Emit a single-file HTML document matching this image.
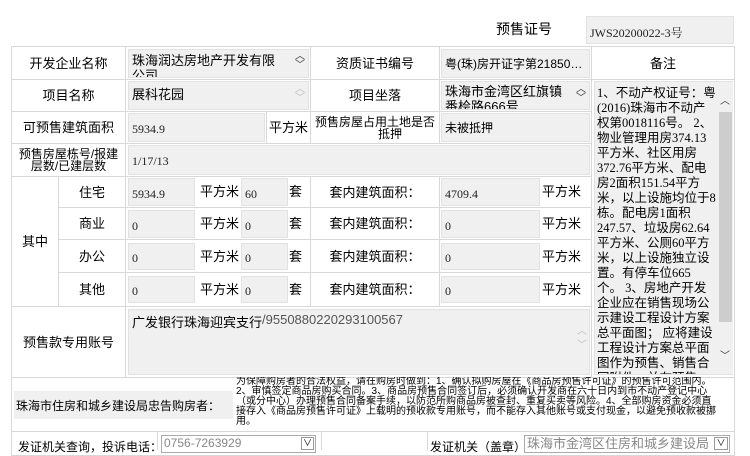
<!DOCTYPE html>
<html><head><meta charset="utf-8"><style>
*{margin:0;padding:0;box-sizing:border-box}
body{width:750px;height:450px;background:#fff;position:relative;overflow:hidden;font-family:"Liberation Sans","Noto Sans CJK SC",sans-serif;font-size:13px;color:#000}
.a{position:absolute}
.c{position:absolute;border:1px solid #d8d8d8;display:flex;align-items:center;justify-content:center;text-align:center;line-height:13px}
.i{position:absolute;background:#f0f0f0;border:1px solid #e2e2e2;display:flex;align-items:center;padding-left:3px;font-family:"Liberation Serif","Noto Serif CJK SC",serif;font-size:12px;color:#222;white-space:nowrap;overflow:hidden}
.u{position:absolute;display:flex;align-items:center;font-size:13px}
.arr{position:absolute;font-size:10px;color:#333;line-height:9px;text-align:center;width:12px}
</style></head><body>
<div class="a" style="left:496px;top:19px;font-size:14px">预售证号</div>
<div class="i" style="left:586px;top:16px;width:148px;height:28px;padding-top:4px">JWS20200022-3号</div>

<div class="c" style="left:11px;top:46px;width:115px;height:34px">开发企业名称</div>
<div class="c" style="left:125px;top:46px;width:186px;height:34px"></div>
<div class="c" style="left:310px;top:46px;width:130px;height:34px">资质证书编号</div>
<div class="c" style="left:439px;top:46px;width:153px;height:34px"></div>
<div class="c" style="left:591px;top:46px;width:144px;height:34px">备注</div>

<div class="c" style="left:11px;top:79px;width:115px;height:33px">项目名称</div>
<div class="c" style="left:125px;top:79px;width:186px;height:33px"></div>
<div class="c" style="left:310px;top:79px;width:130px;height:33px">项目坐落</div>
<div class="c" style="left:439px;top:79px;width:153px;height:33px"></div>
<div class="c" style="left:591px;top:79px;width:144px;height:299px"></div>

<div class="c" style="left:11px;top:111px;width:115px;height:33px">可预售建筑面积</div>
<div class="c" style="left:125px;top:111px;width:142px;height:33px"></div>
<div class="c" style="left:266px;top:111px;width:45px;height:33px">平方米</div>
<div class="c" style="left:310px;top:111px;width:130px;height:33px;font-size:12px;line-height:12px">预售房屋占用土地是否<br>&nbsp;&nbsp;&nbsp;&nbsp;&nbsp;&nbsp;&nbsp;&nbsp;&nbsp;抵押</div>
<div class="c" style="left:439px;top:111px;width:153px;height:33px"></div>

<div class="c" style="left:11px;top:143px;width:115px;height:34px;font-size:12px;line-height:12px">预售房屋栋号/报建<br>层数/已建层数</div>
<div class="c" style="left:125px;top:143px;width:467px;height:34px"></div>

<div class="c" style="left:11px;top:176px;width:48px;height:131px">其中</div>
<div class="c" style="left:58px;top:176px;width:68px;height:32px">住宅</div>
<div class="c" style="left:58px;top:207px;width:68px;height:33px">商业</div>
<div class="c" style="left:58px;top:239px;width:68px;height:34px">办公</div>
<div class="c" style="left:58px;top:272px;width:68px;height:35px">其他</div>
<div class="c" style="left:125px;top:176px;width:186px;height:32px"></div>
<div class="c" style="left:125px;top:207px;width:186px;height:33px"></div>
<div class="c" style="left:125px;top:239px;width:186px;height:34px"></div>
<div class="c" style="left:125px;top:272px;width:186px;height:35px"></div>
<div class="c" style="left:310px;top:176px;width:130px;height:32px">套内建筑面积：</div>
<div class="c" style="left:310px;top:207px;width:130px;height:33px">套内建筑面积：</div>
<div class="c" style="left:310px;top:239px;width:130px;height:34px">套内建筑面积：</div>
<div class="c" style="left:310px;top:272px;width:130px;height:35px">套内建筑面积：</div>
<div class="c" style="left:439px;top:176px;width:153px;height:32px"></div>
<div class="c" style="left:439px;top:207px;width:153px;height:33px"></div>
<div class="c" style="left:439px;top:239px;width:153px;height:34px"></div>
<div class="c" style="left:439px;top:272px;width:153px;height:35px"></div>

<div class="c" style="left:11px;top:306px;width:115px;height:72px">预售款专用账号</div>
<div class="c" style="left:125px;top:306px;width:467px;height:72px"></div>

<div class="c" style="left:11px;top:377px;width:724px;height:55px"></div>
<div class="c" style="left:11px;top:431px;width:724px;height:25px"></div>

<div class="i" style="left:128px;top:49px;width:181px;height:29px;align-items:flex-start;padding:3px 22px 0 3px;font-family:'Liberation Sans','Noto Sans CJK SC',sans-serif;font-size:13px;line-height:15px;white-space:normal;color:#000">珠海润达房地产开发有限公司</div>
<div class="arr" style="left:294px;top:52px;color:#333">︿<br>﹀</div>
<div class="i" style="left:441px;top:49px;width:149px;height:29px;font-family:'Liberation Sans','Noto Sans CJK SC',sans-serif;color:#000">粤(珠)房开证字第21850…</div>
<div class="i" style="left:128px;top:81px;width:181px;height:29px;align-items:flex-start;padding-top:2px;font-family:'Liberation Sans','Noto Sans CJK SC',sans-serif;font-size:13px;color:#000">展科花园</div>
<div class="arr" style="left:294px;top:85px;color:#bbb">︿<br>﹀</div>
<div class="i" style="left:441px;top:81px;width:149px;height:29px;align-items:flex-start;padding-top:2px;font-family:'Liberation Sans','Noto Sans CJK SC',sans-serif;font-size:13px;line-height:15px;white-space:normal;color:#000;padding-right:16px">珠海市金湾区红旗镇番桧路666号</div>
<div class="arr" style="left:575px;top:85px">︿<br>﹀</div>
<div class="i" style="left:128px;top:113px;width:137px;height:29px;padding-top:4px">5934.9</div>
<div class="i" style="left:441px;top:113px;width:149px;height:29px;font-family:'Liberation Sans','Noto Sans CJK SC',sans-serif;color:#000">未被抵押</div>
<div class="i" style="left:128px;top:145px;width:462px;height:30px;padding-top:2px">1/17/13</div>

<div class="i" style="left:128px;top:178px;width:67px;height:28px;padding-top:4px">5934.9</div>
<div class="u" style="left:200px;top:178px;height:24px">平方米</div>
<div class="i" style="left:241px;top:178px;width:47px;height:28px;padding-top:4px">60</div>
<div class="u" style="left:289px;top:178px;height:24px">套</div>
<div class="i" style="left:441px;top:178px;width:99px;height:28px;padding-top:4px">4709.4</div>
<div class="u" style="left:542px;top:178px;height:24px">平方米</div>

<div class="i" style="left:128px;top:210px;width:67px;height:28px;padding-top:4px">0</div>
<div class="u" style="left:200px;top:210px;height:24px">平方米</div>
<div class="i" style="left:241px;top:210px;width:47px;height:28px;padding-top:4px">0</div>
<div class="u" style="left:289px;top:210px;height:24px">套</div>
<div class="i" style="left:441px;top:210px;width:99px;height:28px;padding-top:4px">0</div>
<div class="u" style="left:542px;top:210px;height:24px">平方米</div>

<div class="i" style="left:128px;top:243px;width:67px;height:27px;padding-top:4px">0</div>
<div class="u" style="left:200px;top:243px;height:24px">平方米</div>
<div class="i" style="left:241px;top:243px;width:47px;height:27px;padding-top:4px">0</div>
<div class="u" style="left:289px;top:243px;height:24px">套</div>
<div class="i" style="left:441px;top:243px;width:99px;height:27px;padding-top:4px">0</div>
<div class="u" style="left:542px;top:243px;height:24px">平方米</div>

<div class="i" style="left:128px;top:276px;width:67px;height:27px;padding-top:4px">0</div>
<div class="u" style="left:200px;top:276px;height:24px">平方米</div>
<div class="i" style="left:241px;top:276px;width:47px;height:27px;padding-top:4px">0</div>
<div class="u" style="left:289px;top:276px;height:24px">套</div>
<div class="i" style="left:441px;top:276px;width:99px;height:27px;padding-top:4px">0</div>
<div class="u" style="left:542px;top:276px;height:24px">平方米</div>

<div class="i" style="left:128px;top:309px;width:462px;height:66px;align-items:flex-start;padding-top:2px;font-family:'Liberation Sans','Noto Sans CJK SC',sans-serif;font-size:13px;color:#000">广发银行珠海迎宾支行<span style="color:#555">/9550880220293100567</span></div>
<div class="arr" style="left:576px;top:325px;color:#bbb;line-height:14px">︿<br>﹀</div>

<div class="i" style="left:594px;top:81px;width:139px;height:294px;align-items:flex-start;padding:4px 0 0 2px;white-space:nowrap;font-family:'Liberation Serif','Noto Sans CJK SC',serif;font-size:12.5px;line-height:15px;color:#000">1、不动产权证号：粤<br>(2016)珠海市不动产<br>权第0018116号。 2、<br>物业管理用房374.13<br>平方米、社区用房<br>372.76平方米、配电<br>房2面积151.54平方<br>米，以上设施均位于8<br>栋。配电房1面积<br>247.57、垃圾房62.64<br>平方米、公厕60平方<br>米，以上设施独立设<br>置。有停车位665<br>个。 3、房地产开发<br>企业应在销售现场公<br>示建设工程设计方案<br>总平面图； 应将建设<br>工程设计方案总平面<br>图作为预售、销售合<br>同附件，并在预售、</div>
<div class="a" style="left:718px;top:82px;width:15px;height:292px;background:#f0f0f0"></div>
<div class="a" style="left:719px;top:112px;width:13px;height:210px;background:#cdcdcd"></div>
<div class="arr" style="left:719px;top:97px">︿</div>
<div class="arr" style="left:719px;top:352px">﹀</div>

<div class="a" style="left:14px;top:391px;width:219px;height:28px;background:#f0f0f0;font-size:12px;display:flex;align-items:center;padding-left:2px">珠海市住房和城乡建设局忠告购房者：</div>
<div class="a" style="left:236px;top:377px;width:500px;font-size:10px;line-height:10px;white-space:nowrap;overflow:hidden">为保障购房者的合法权益，请在购房时做到：1、确认拟购房屋在《商品房预售许可证》的预售许可范围内。<br>2、审慎签定商品房购买合同。3、商品房预售合同签订后，必须确认开发商在六十日内到市不动产登记中心<br>（或分中心）办理预售合同备案手续，以防范所购商品房被查封、重复买卖等风险。4、全部购房资金必须直<br>接存入《商品房预售许可证》上载明的预收款专用账号，而不能存入其他账号或支付现金，以避免预收款被挪<br>用。</div>

<div class="a" style="left:157px;top:431px;width:1px;height:19px;background:#d8d8d8"></div>
<div class="a" style="left:321px;top:431px;width:1px;height:19px;background:#d8d8d8"></div>
<div class="a" style="left:427px;top:431px;width:1px;height:19px;background:#d8d8d8"></div>
<div class="a" style="left:18px;top:438px;font-size:12px">发证机关查询，投诉电话：</div>
<div class="a" style="left:161px;top:435px;width:155px;height:18px;border:1px solid #aaa;color:#888;font-size:12px;padding-left:2px;line-height:15px">0756-7263929</div>
<div class="a" style="left:301px;top:437px;width:13px;height:13px;border:1px solid #999;font-size:9px;text-align:center;line-height:10px">∨</div>
<div class="a" style="left:430px;top:438px;font-size:12px">发证机关（盖章）</div>
<div class="a" style="left:524px;top:435px;width:206px;height:18px;border:1px solid #aaa;color:#888;font-size:13px;padding-left:2px;line-height:15px">珠海市金湾区住房和城乡建设局</div>
<div class="a" style="left:714px;top:437px;width:14px;height:13px;border:1px solid #999;font-size:9px;text-align:center;line-height:10px">∨</div>
</body></html>
